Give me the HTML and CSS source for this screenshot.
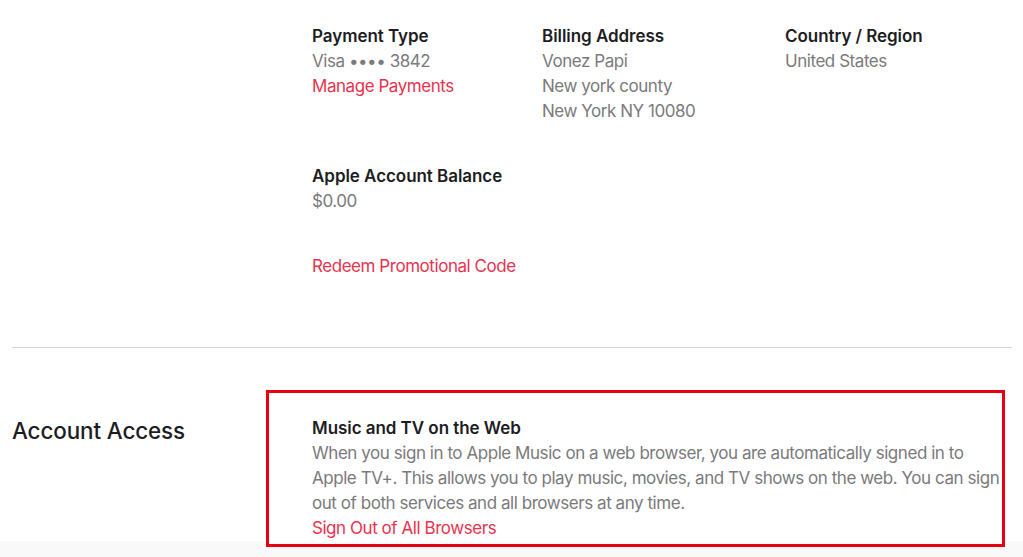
FILE: index.html
```html
<!DOCTYPE html>
<html lang="en">
<head>
    <meta charset="UTF-8">
    <meta name="viewport" content="width=device-width, initial-scale=1.0">
    <title>Account Settings</title>
    <link rel="stylesheet" href="styles.css">
</head>
<body>
    <div class="page">
        <section class="section section-payment">
            <div class="section-title"></div>
            <div class="section-body">
                <div class="info-grid">
                    <div class="info-item">
                        <h3 class="info-label">Payment Type</h3>
                        <p class="info-value">Visa •••• 3842</p>
                        <a class="info-link" href="#">Manage Payments</a>
                    </div>
                    <div class="info-item">
                        <h3 class="info-label">Billing Address</h3>
                        <p class="info-value">Vonez Papi</p>
                        <p class="info-value">New york county</p>
                        <p class="info-value">New York NY 10080</p>
                    </div>
                    <div class="info-item">
                        <h3 class="info-label">Country / Region</h3>
                        <p class="info-value">United States</p>
                    </div>
                </div>

                <div class="info-item balance">
                    <h3 class="info-label">Apple Account Balance</h3>
                    <p class="info-value">$0.00</p>
                </div>

                <a class="info-link redeem" href="#">Redeem Promotional Code</a>
            </div>
        </section>

        <hr class="divider">

        <section class="section section-access">
            <h2 class="section-title">Account Access</h2>
            <div class="section-body">
                <div class="info-item">
                    <h3 class="info-label">Music and TV on the Web</h3>
                    <p class="info-value">When you sign in to Apple Music on a web browser, you are automatically signed in to Apple TV+. This allows you to play music, movies, and TV shows on the web. You can sign out of both services and all browsers at any time.</p>
                    <a class="info-link" href="#">Sign Out of All Browsers</a>
                </div>
            </div>
            <div class="highlight-box"></div>
        </section>
    </div>
    <footer class="footer"></footer>
</body>
</html>
```

FILE: styles.css
```css
* {
    margin: 0;
    padding: 0;
    box-sizing: border-box;
}

body {
    font-family: Inter, "Open Sans", sans-serif;
    font-size: 17px;
    line-height: 25px;
    color: #1d1d1f;
    background: #fff;
}

.page {
    padding: 24px 11px 0 12px;
}

.section {
    display: grid;
    grid-template-columns: 300px 1fr;
    position: relative;
}

.section-title {
    font-size: 22.4px;
    font-weight: 500;
    line-height: 28px;
    color: #1d1d1f;
    padding-top: 1px;
    letter-spacing: -0.1px;
}

.info-grid {
    display: grid;
    grid-template-columns: 230px 243px auto;
}

.info-label {
    font-size: 17px;
    font-weight: 600;
    line-height: 25px;
    letter-spacing: -0.05px;
}

.info-value {
    color: #7a7a7c;
    letter-spacing: -0.45px;
}

.info-link {
    display: block;
    color: #e8334f;
    text-decoration: none;
    letter-spacing: -0.45px;
}

.balance {
    margin-top: 40px;
}

.redeem {
    margin-top: 40px;
}

.divider {
    border: none;
    border-top: 1px solid #d2d2d7;
    margin: 68px 0 68px;
}

.section-access .section-body {
    padding-right: 10px;
}

.highlight-box {
    position: absolute;
    left: 254px;
    top: -26px;
    width: 739px;
    height: 157px;
    border: 3px solid #e60012;
    pointer-events: none;
}

.footer {
    height: 40px;
    background: #f9f9f9;
}
```
